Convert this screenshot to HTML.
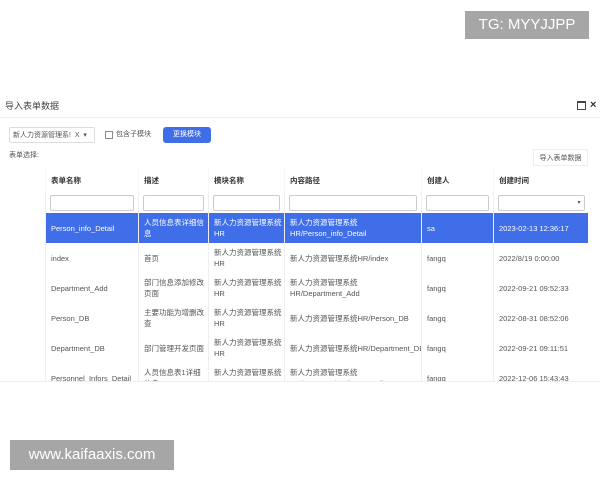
<!DOCTYPE html><html><head><style>
body{margin:0;width:600px;height:480px;background:#fff;font-family:"Liberation Sans","Noto Sans CJK SC",sans-serif;position:relative;overflow:hidden;color:#555}
.a{position:absolute}
.t{font-size:8px}
table{border-collapse:collapse;position:absolute;left:45px;top:168px;width:543px;font-size:7.5px;table-layout:fixed}
td{border-left:1px solid #eee;padding:0 5px;vertical-align:middle;line-height:11px;overflow:hidden;white-space:nowrap}
tr.h td{height:24px;font-weight:bold;color:#333;background:#fff;border-left-color:#f6f6f6}
tr.f td{height:21px;padding:0 4px}
tr.f div{height:14px;border:1px solid #ccc;border-radius:2px;background:#fff}
tr.r td{height:30px}
tr.s td{background:#3f6ee8;color:#fff}
</style></head><body>
<div class="a" style="left:465px;top:11px;width:124px;height:28px;background:#a6a6a6;color:#fff;font-size:15px;line-height:28px;text-align:center">TG: MYYJJPP</div>
<div class="a" style="left:5px;top:99px;font-size:9px;color:#444">导入表单数据</div>
<div class="a" style="left:577px;top:101px;width:7px;height:6px;border:1px solid #444;border-top-width:2px"></div>
<div class="a" style="left:590px;top:99px;font-size:11px;color:#333;font-weight:bold">×</div>
<div class="a" style="left:0;top:117px;width:600px;height:1px;background:#eee"></div>
<div class="a t" style="left:9px;top:127px;width:86px;height:16px;border:1px solid #ddd;border-radius:2px;line-height:15px;font-size:7px;padding-left:3px;box-sizing:border-box">新人力资源管理系! &nbsp;X &nbsp;▾</div>
<div class="a" style="left:105px;top:131px;width:6px;height:6px;border:1px solid #888"></div>
<div class="a" style="left:116px;top:129px;font-size:7px">包含子模块</div>
<div class="a" style="left:163px;top:127px;width:48px;height:16px;background:#3f6ee8;border-radius:3px;color:#fff;font-size:7px;text-align:center;line-height:16px">更换模块</div>
<div class="a" style="left:9px;top:150px;font-size:7px">表单选择:</div>
<div class="a" style="left:533px;top:149px;width:55px;height:17px;border:1px solid #eee;font-size:7px;text-align:center;line-height:17px;box-sizing:border-box">导入表单数据</div>
<div class="a" style="left:45px;top:168px;width:543px;height:213px;overflow:hidden">
<table style="left:0;top:0">
<colgroup><col style="width:93px"><col style="width:70px"><col style="width:76px"><col style="width:137px"><col style="width:72px"><col style="width:95px"></colgroup>
<tr class="h"><td>表单名称</td><td>描述</td><td>模块名称</td><td>内容路径</td><td>创建人</td><td>创建时间</td></tr>
<tr class="f"><td><div></div></td><td><div></div></td><td><div></div></td><td><div></div></td><td><div></div></td><td><div style="text-align:right;font-size:6px;line-height:14px;padding-right:3px">▾</div></td></tr>
<tr class="r s"><td>Person_info_Detail</td><td>人员信息表详细信<br>息</td><td>新人力资源管理系统<br>HR</td><td>新人力资源管理系统<br>HR/Person_info_Detail</td><td>sa</td><td>2023-02-13 12:36:17</td></tr>
<tr class="r"><td>index</td><td>首页</td><td>新人力资源管理系统<br>HR</td><td>新人力资源管理系统HR/index</td><td>fangq</td><td>2022/8/19 0:00:00</td></tr>
<tr class="r"><td>Department_Add</td><td>部门信息添加修改<br>页面</td><td>新人力资源管理系统<br>HR</td><td>新人力资源管理系统<br>HR/Department_Add</td><td>fangq</td><td>2022-09-21 09:52:33</td></tr>
<tr class="r"><td>Person_DB</td><td>主要功能为增删改<br>查</td><td>新人力资源管理系统<br>HR</td><td>新人力资源管理系统HR/Person_DB</td><td>fangq</td><td>2022-08-31 08:52:06</td></tr>
<tr class="r"><td>Department_DB</td><td>部门管理开发页面</td><td>新人力资源管理系统<br>HR</td><td>新人力资源管理系统HR/Department_DB</td><td>fangq</td><td>2022-09-21 09:11:51</td></tr>
<tr class="r"><td>Personnel_Infors_Detail</td><td>人员信息表1详细<br>信息</td><td>新人力资源管理系统<br>HR</td><td>新人力资源管理系统<br>HR/Personnel_Infors_Detail</td><td>fangq</td><td>2022-12-06 15:43:43</td></tr>
</table></div>
<div class="a" style="left:0;top:381px;width:600px;height:1px;background:#eee"></div>
<div class="a" style="left:10px;top:440px;width:164px;height:30px;background:#a6a6a6;color:#fff;font-size:15px;line-height:30px;text-align:center">www.kaifaaxis.com</div>
</body></html>
